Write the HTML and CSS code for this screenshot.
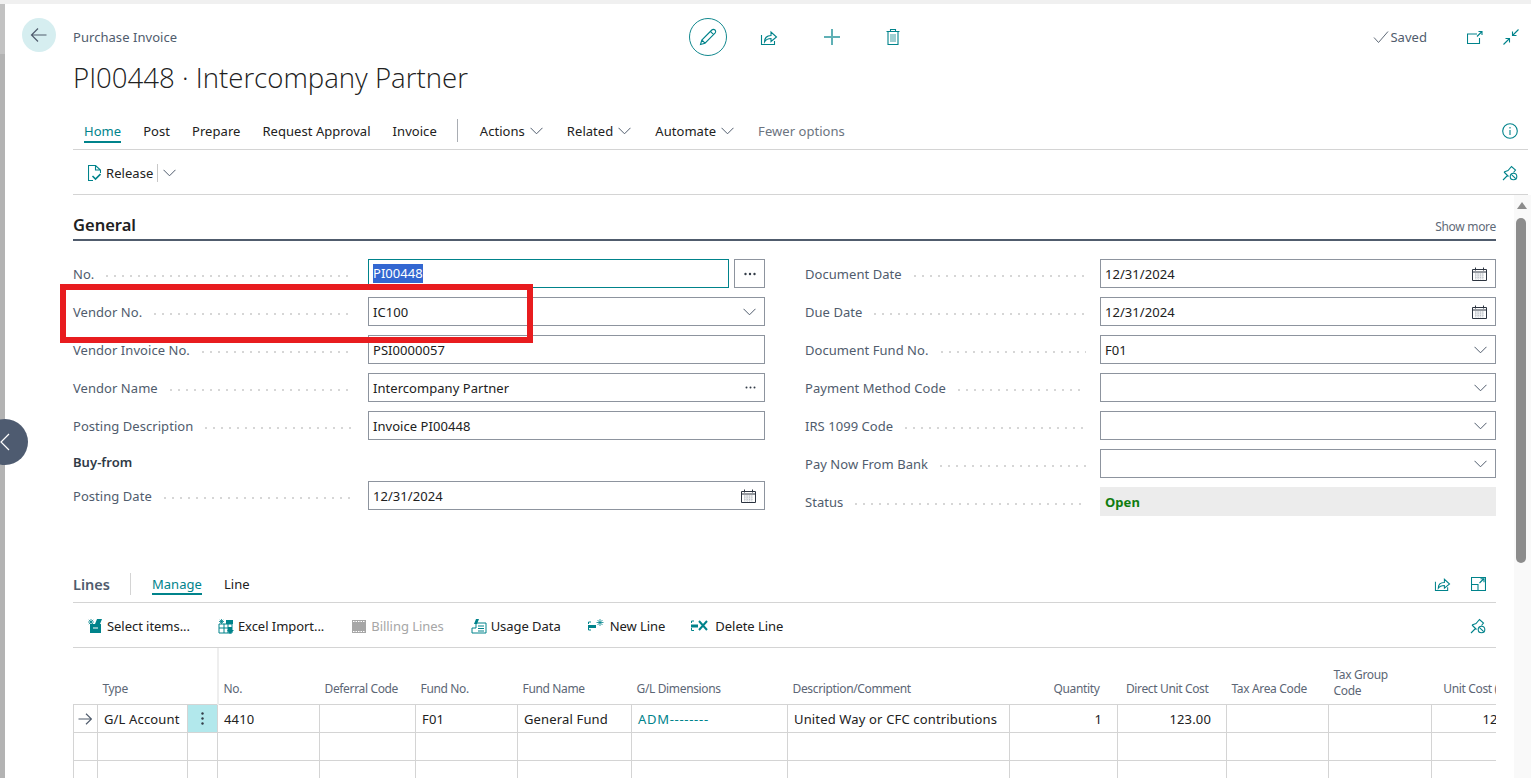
FILE: index.html
```html
<!DOCTYPE html>
<html lang="en">
<head>
<meta charset="utf-8">
<title>Purchase Invoice</title>
<link rel="stylesheet" href="styles.css">
</head>
<body>
<div class="app">
  <div class="topstrip"></div>
  <div class="shell">
    <div class="gutter"></div>
    <main class="page">
      <header class="head">
        <button class="back" aria-label="Back">
          <svg width="18" height="18" viewBox="0 0 18 18" class="ic-dark"><path d="M16.500 9H1.500M8 2.500 1.500 9 8 15.500"/></svg>
        </button>
        <div class="titles">
          <div class="crumb">Purchase Invoice</div>
          <h1 class="title">PI00448 · Intercompany Partner</h1>
        </div>
        <div class="actions">
          <button class="edit" aria-label="Edit">
            <svg width="18" height="18" viewBox="0 0 18 18" class="ic"><path d="M1.500 16.500 2.800 12 12.800 2a2 2 0 0 1 3.200 3.200L6 15.200zM2.800 12 6 15.200M11.400 3.400l3.200 3.200"/></svg>
          </button>
          <svg class="ic act" width="18" height="18" viewBox="0 0 18 18"><path d="M1.500 7v9.500h13V13M4.500 14c0-4 2.500-6.500 6.500-6.500V4l5.500 5L11 13.500V10.500c-3 0-5 1-6.500 3.500z"/></svg>
          <svg class="ic-soft act" width="18" height="18" viewBox="0 0 18 18"><path d="M9 1v16M1 9h16"/></svg>
          <svg class="ic act" width="16" height="18" viewBox="0 0 16 18"><path d="M1.500 3.500h13M5.500 3.500V1.500h5v2M3 3.500v13h10v-13"/><path class="thin" d="M6 6v8M8 6v8M10 6v8"/></svg>
        </div>
        <div class="status-area">
          <svg class="ic-grey" width="16" height="14" viewBox="0 0 16 14"><path d="M1 7.500 5.500 12.500 15 1.500"/></svg>
          <span class="saved">Saved</span>
          <svg class="ic popout" width="16" height="13" viewBox="0 0 16 13"><path d="M10 3H.5v9.500h12V7M10 5.500l5-5M11.500.5H15V4"/></svg>
          <svg class="ic collapse" width="16" height="16" viewBox="0 0 16 16"><path d="M15.500.5 9.500 6.500M9.500 2.500v4H13.500M.5 15.500l6-6M2.500 9.500h4v4"/></svg>
        </div>
      </header>

      <nav class="tabs">
        <a class="tab active">Home</a>
        <a class="tab">Post</a>
        <a class="tab">Prepare</a>
        <a class="tab">Request Approval</a>
        <a class="tab">Invoice</a>
        <span class="tab-div"></span>
        <a class="tab menu">Actions <svg class="chev" width="13" height="8" viewBox="0 0 13 8"><path d="M.5.800 6.500 6.800 12.500.800"/></svg></a>
        <a class="tab menu">Related <svg class="chev" width="13" height="8" viewBox="0 0 13 8"><path d="M.5.800 6.500 6.800 12.500.800"/></svg></a>
        <a class="tab menu">Automate <svg class="chev" width="13" height="8" viewBox="0 0 13 8"><path d="M.5.800 6.500 6.800 12.500.800"/></svg></a>
        <a class="tab muted">Fewer options</a>
        <svg class="ic info" width="16" height="16" viewBox="0 0 16 16"><circle cx="8" cy="8" r="7.300"/><path d="M8 7v5M8 4v1.500"/></svg>
      </nav>

      <div class="cmdbar">
        <svg class="ic" width="13" height="16" viewBox="0 0 13 16"><path d="M5 15.500H.5V.5h7l5 4.500V8M7.500.5V5h5"/><path class="check" d="M4.500 11l3 3 5-5"/></svg>
        <span class="cmd-text">Release</span>
        <span class="cmd-div"></span>
        <svg class="chev" width="13" height="8" viewBox="0 0 13 8"><path d="M.5.800 6.500 6.800 12.500.800"/></svg>
        <svg class="ic pin" width="16" height="16" viewBox="0 0 16 16"><path d="M1 15l4.500-4.500M2 7l4-1.500L9.500 1.500l4 3.500-2 2.500M2 7l4.500 4.500"/><circle cx="11.500" cy="11.500" r="3.300"/><path d="M9.300 9.300l4.400 4.400"/></svg>
      </div>

      <section class="general">
        <div class="sec-head">
          <h2 class="sec-title">General</h2>
          <span class="show-more">Show more</span>
        </div>
        <div class="form">
          <div class="col">
            <div class="field"><span class="lbl">No.</span><i class="dots"></i>
              <div class="box focus"><span class="sel">PI00448</span></div>
              <button class="assist">
                <svg width="12" height="4" viewBox="0 0 12 4" class="fill-dark"><circle cx="1.500" cy="2" r="1.200"/><circle cx="6" cy="2" r="1.200"/><circle cx="10.500" cy="2" r="1.200"/></svg>
              </button>
            </div>
            <div class="field"><span class="lbl">Vendor No.</span><i class="dots"></i>
              <div class="box">IC100<svg class="chev end" width="13" height="8" viewBox="0 0 13 8"><path d="M.5.800 6.500 6.800 12.500.800"/></svg></div>
            </div>
            <div class="field"><span class="lbl">Vendor Invoice No.</span><i class="dots"></i><div class="box">PSI0000057</div></div>
            <div class="field"><span class="lbl">Vendor Name</span><i class="dots"></i>
              <div class="box">Intercompany Partner<svg class="fill-dark end" width="11" height="3" viewBox="0 0 11 3"><circle cx="1.500" cy="1.500" r="1"/><circle cx="5.500" cy="1.500" r="1"/><circle cx="9.500" cy="1.500" r="1"/></svg></div>
            </div>
            <div class="field"><span class="lbl">Posting Description</span><i class="dots"></i><div class="box">Invoice PI00448</div></div>
            <div class="subhead">Buy-from</div>
            <div class="field"><span class="lbl">Posting Date</span><i class="dots"></i>
              <div class="box">12/31/2024<svg class="cal end" width="15" height="14" viewBox="0 0 15 14"><path d="M.5 2.500h14v11H.5zM3.500.500v3M11.500.500v3M.5 5h14"/><path class="grid" d="M3 7h9M3 9h9M3 11h9M4 6.500v6M6.300 6.500v6M8.600 6.500v6M11 6.500v6"/></svg></div>
            </div>
          </div>
          <div class="col">
            <div class="field"><span class="lbl">Document Date</span><i class="dots"></i>
              <div class="box">12/31/2024<svg class="cal end" width="15" height="14" viewBox="0 0 15 14"><path d="M.5 2.500h14v11H.5zM3.500.500v3M11.500.500v3M.5 5h14"/><path class="grid" d="M3 7h9M3 9h9M3 11h9M4 6.500v6M6.300 6.500v6M8.600 6.500v6M11 6.500v6"/></svg></div>
            </div>
            <div class="field"><span class="lbl">Due Date</span><i class="dots"></i>
              <div class="box">12/31/2024<svg class="cal end" width="15" height="14" viewBox="0 0 15 14"><path d="M.5 2.500h14v11H.5zM3.500.500v3M11.500.500v3M.5 5h14"/><path class="grid" d="M3 7h9M3 9h9M3 11h9M4 6.500v6M6.300 6.500v6M8.600 6.500v6M11 6.500v6"/></svg></div>
            </div>
            <div class="field"><span class="lbl">Document Fund No.</span><i class="dots"></i>
              <div class="box">F01<svg class="chev end" width="13" height="8" viewBox="0 0 13 8"><path d="M.5.800 6.500 6.800 12.500.800"/></svg></div>
            </div>
            <div class="field"><span class="lbl">Payment Method Code</span><i class="dots"></i>
              <div class="box"><svg class="chev end" width="13" height="8" viewBox="0 0 13 8"><path d="M.5.800 6.500 6.800 12.500.800"/></svg></div>
            </div>
            <div class="field"><span class="lbl">IRS 1099 Code</span><i class="dots"></i>
              <div class="box"><svg class="chev end" width="13" height="8" viewBox="0 0 13 8"><path d="M.5.800 6.500 6.800 12.500.800"/></svg></div>
            </div>
            <div class="field"><span class="lbl">Pay Now From Bank</span><i class="dots"></i>
              <div class="box"><svg class="chev end" width="13" height="8" viewBox="0 0 13 8"><path d="M.5.800 6.500 6.800 12.500.800"/></svg></div>
            </div>
            <div class="field"><span class="lbl">Status</span><i class="dots"></i><div class="box readonly">Open</div></div>
          </div>
        </div>
      </section>

      <section class="lines">
        <div class="lines-head">
          <span class="lines-title">Lines</span>
          <span class="lines-div"></span>
          <a class="ltab active">Manage</a>
          <a class="ltab">Line</a>
          <svg class="ic l-share" width="17" height="16" viewBox="0 0 18 17"><path d="M1.500 6v9.500h13V12M4.500 13c0-4 2.500-6 6.500-6V3.500l5.500 5L11 13V10c-3 0-5 .5-6.500 3z"/></svg>
          <svg class="ic l-expand" width="15" height="14" viewBox="0 0 15 14"><path d="M.5 13.500V.5h14v13zM.5 7.500h6.500v6M8.500 6 13 1.500M9.500 1.800H13v3.500"/></svg>
        </div>
        <div class="toolbar">
          <span class="tool"><svg class="tool-ic" width="16" height="16" viewBox="0 0 16 16"><path class="solid" d="M3 6h11v9H3z"/><path class="cut" d="M6 10h5"/><path class="spark" d="M4 1v6M1 4h6M1.800 1.800l4.400 4.400M6.200 1.800 1.800 6.200"/><path class="solid" d="M10 1h5l-2 5h-5z"/></svg>Select items...</span>
          <span class="tool"><svg class="tool-ic" width="16" height="16" viewBox="0 0 16 16"><path class="line" d="M1 6h13v9H1zM1 10h13M6 6v9M10 6v9"/><path class="spark" d="M3.500 1v5M1 3.500h5M1.800 1.800l3.400 3.400M5.200 1.800 1.800 5.200"/><path class="solid" d="M8 2h7v4H8zM10 9h4v3h2l-4 4-3-4h1z"/></svg>Excel Import...</span>
          <span class="tool off"><svg class="tool-ic ic-w5" width="14" height="13" viewBox="0 0 14 13"><path class="greyfill" d="M0 0h14v13H0z"/><path class="cut" d="M1 1.500h12M1 11.500h12" stroke-dasharray="1.500 1"/></svg>Billing Lines</span>
          <span class="tool tight"><svg class="tool-ic" width="16" height="15" viewBox="0 0 16 15"><path class="solid" d="M5 0h3L6 5H3z"/><path class="line" d="M5 4h10v10H1V9h4zM7 7h6M7 9.500h6M7 12h6"/></svg>Usage Data</span>
          <span class="tool tighter"><svg class="tool-ic ic-w6" width="16" height="14" viewBox="0 0 16 14"><path class="line" d="M3 3H.5M.5 3v2M.5 9v2h2.500"/><path class="solid" d="M0 6h8v3H0z"/><path class="spark" d="M12 0v7M8.500 3.500h7M9.500 1l5 5M14.500 1l-5 5"/></svg>New Line</span>
          <span class="tool"><svg class="tool-ic ic-w7" width="17" height="14" viewBox="0 0 17 14"><path class="line" d="M3 2H.5v2M.5 9v2.500H3"/><path class="solid" d="M0 5.500h7v3H0z"/><path class="heavy" d="M8 2l8 9M16 2l-8 9"/></svg>Delete Line</span>
          <svg class="ic l-pin" width="16" height="16" viewBox="0 0 16 16"><path d="M1 15l4.500-4.500M2 7l4-1.500L9.500 1.500l4 3.500-2 2.500M2 7l4.500 4.500"/><circle cx="11.500" cy="11.500" r="3.300"/><path d="M9.300 9.300l4.400 4.400"/></svg>
        </div>
        <div class="grid-wrap">
          <table class="grid">
            <colgroup>
              <col class="c-a"><col class="c-b"><col class="c-c"><col class="c-d"><col class="c-e"><col class="c-f"><col class="c-g"><col class="c-h"><col class="c-i"><col class="c-j"><col class="c-k"><col class="c-l"><col class="c-m"><col class="c-n">
            </colgroup>
            <thead>
              <tr>
                <th></th><th>Type</th><th class="frozen"></th><th>No.</th><th>Deferral Code</th><th>Fund No.</th><th>Fund Name</th><th>G/L Dimensions</th><th>Description/Comment</th><th class="num">Quantity</th><th class="num">Direct Unit Cost</th><th>Tax Area Code</th><th class="wrap">Tax Group Code</th><th class="num last">Unit Cost (LCY)</th>
              </tr>
            </thead>
            <tbody>
              <tr>
                <td class="arrow"><svg width="14" height="12" viewBox="0 0 14 12" class="ic-dark"><path d="M.5 6h13M8 .8 13.500 6 8 11.200"/></svg></td>
                <td>G/L Account</td>
                <td class="kebab"><svg width="3" height="13" viewBox="0 0 3 13" class="fill-dark"><circle cx="1.500" cy="1.500" r="1.200"/><circle cx="1.500" cy="6.500" r="1.200"/><circle cx="1.500" cy="11.500" r="1.200"/></svg></td>
                <td>4410</td><td></td><td>F01</td><td>General Fund</td><td class="link">ADM--------</td><td>United Way or CFC contributions</td><td class="num">1</td><td class="num">123.00</td><td></td><td></td><td class="num last">123.00</td>
              </tr>
              <tr><td></td><td></td><td></td><td></td><td></td><td></td><td></td><td></td><td></td><td></td><td></td><td></td><td></td><td></td></tr>
              <tr><td></td><td></td><td></td><td></td><td></td><td></td><td></td><td></td><td></td><td></td><td></td><td></td><td></td><td></td></tr>
            </tbody>
          </table>
        </div>
      </section>
    </main>
  </div>

  <div class="scrolltrack">
    <span class="sb-up"></span>
    <span class="sb-thumb"></span>
  </div>
  <button class="side-toggle" aria-label="Previous">
    <svg width="10" height="18" viewBox="0 0 10 18"><path d="M9 1 1 9l8 8"/></svg>
  </button>
  <div class="callout"></div>
</div>
</body>
</html>
```
FILE: styles.css
```css
* { box-sizing: border-box; }
html, body { margin: 0; padding: 0; background: #fff; }
body { font-family: "Noto Sans", "Open Sans", sans-serif; font-size: 13px; letter-spacing: .05px; color: #212121; overflow: hidden; }
button { border: 0; padding: 0; background: none; font: inherit; }
svg { display: block; flex: none; }
.ic path, .ic circle { fill: none; stroke: #00838b; stroke-width: 1.1; }
.ic .thin { stroke: #4fa9ae; }
.ic .check { stroke-width: 1.6; }
.ic-soft path { fill: none; stroke: #5fb0b5; stroke-width: 2; }
.ic-dark path { fill: none; stroke: #505c6d; stroke-width: 1.2; }
.ic-grey path { fill: none; stroke: #5f6a78; stroke-width: 1; }
.chev path { fill: none; stroke: #505c6d; stroke-width: 1; }
.fill-dark circle { fill: #333c48; }
.cal path { fill: none; stroke: #2c3440; stroke-width: 1; }
.cal .grid { stroke: #8a93a0; stroke-width: .6; stroke-dasharray: 1 .8; }

.app { position: relative; width: 1531px; height: 778px; overflow: hidden; display: flex; flex-direction: column; }
.topstrip { height: 4px; background: #f0f0f0; flex: none; }
.shell { display: flex; flex: 1; min-height: 0; }
.gutter { width: 5px; flex: none; background: linear-gradient(#c2c2c2 50px, #b3b3b3 50px); }
.page { flex: 1; min-width: 0; padding: 0 3px 0 17px; }

.head { display: flex; height: 108px; padding-top: 14px; }
.back { width: 34px; height: 34px; border-radius: 50%; background: #d6eef0; display: flex; align-items: center; justify-content: center; margin-right: 17px; flex: none; }
.titles { width: 616px; flex: none; padding-top: 10px; }
.crumb { font-size: 13px; line-height: 18px; color: #505c6d; }
.title { margin: 12px 0 0; font-family: "Open Sans", sans-serif; font-weight: 300; font-size: 27.6px; line-height: 38px; color: #212121; letter-spacing: 0; white-space: nowrap; }
.actions { display: flex; align-items: flex-start; }
.edit { width: 38px; height: 38px; border: 1px solid #13898f; border-radius: 50%; display: flex; align-items: center; justify-content: center; }
.act { margin-top: 10px; }
.actions .act:nth-child(2) { margin-left: 33px; }
.actions .act:nth-child(3) { margin-left: 45px; }
.actions .act:nth-child(4) { margin-left: 44px; }
.status-area { margin-left: auto; display: flex; align-items: center; height: 38px; padding-right: 9px; }
.saved { color: #505c6d; margin-left: 1px; }
.popout { margin-left: 40px; }
.collapse { margin-left: 20px; }

.tabs { display: flex; align-items: center; height: 38px; margin-left: 51px; border-bottom: 1px solid #d4d4d4; padding-left: 11px; }
.tab { position: relative; margin-right: 22px; line-height: 20px; color: #212121; display: flex; align-items: center; white-space: nowrap; }
.tab.active { color: #00838b; }
.tab.active::after { content: ""; position: absolute; left: 0; right: 0; bottom: -2px; height: 2px; background: #00838b; }
.tab.muted { color: #6b7480; }
.tab.menu { margin-right: 24px; }
.tab.menu .chev { margin-left: 5px; }
.tab-div { width: 1px; height: 23px; background: #a9adb3; margin: 0 22px 0 -2px; }
.info { margin-left: auto; margin-right: 10px; }

.cmdbar { display: flex; align-items: center; height: 45px; margin-left: 51px; border-bottom: 1px solid #d4d4d4; padding: 1px 0 0 15px; }
.cmd-text { margin-left: 5px; }
.cmd-div { width: 1px; height: 18px; background: #c8c8c8; margin: 0 5px 0 4px; }
.pin { margin-left: auto; margin-right: 10px; }

.general { margin: 0 32px 0 51px; }
.sec-head { display: flex; align-items: center; justify-content: space-between; height: 46px; padding-top: 16px; border-bottom: 2px solid #505c6d; }
.sec-title { margin: 0; font-size: 16.5px; font-weight: 600; line-height: 22px; letter-spacing: 0; }
.show-more { font-size: 12px; color: #5f6a78; letter-spacing: -.3px; margin-top: 3px; }
.form { display: grid; grid-template-columns: 692px 691px; column-gap: 40px; padding-top: 18px; }
.col { display: flex; flex-direction: column; gap: 9px; }
.field { display: flex; align-items: center; height: 29px; }
.lbl { color: #505c6d; white-space: nowrap; }
.dots { flex: 1; height: 2px; margin: 4px 14px 0 12px; background-image: linear-gradient(to right, #d6d6d6 2px, transparent 2px); background-size: 8px 2px; background-repeat: repeat-x; }
.box { width: 397px; height: 29px; flex: none; border: 1px solid #8d949e; padding: 0 4px; display: flex; align-items: center; white-space: nowrap; }
.col:nth-child(2) .box { width: 396px; }
.box .end { margin-left: auto; margin-right: 4px; }
.box.focus { width: 361px; border-color: #00838b; }
.sel { background: #3367d1; color: #fff; line-height: 19px; }
.assist { width: 31px; height: 29px; margin-left: 5px; border: 1px solid #8d949e; display: flex; align-items: center; justify-content: center; flex: none; }
.box.readonly { background: #ececec; border-color: #ececec; color: #107c10; font-weight: 700; }
.subhead { font-weight: 600; color: #303a46; height: 19px; line-height: 19px; margin-top: 4px; }

.lines { margin: 0 32px 0 51px; padding-top: 52px; }
.lines-head { display: flex; align-items: center; height: 35px; border-bottom: 1px solid #d4d4d4; padding-bottom: 3px; }
.lines-title { font-size: 14.5px; font-weight: 600; color: #505c6d; letter-spacing: 0; }
.lines-div { width: 1px; height: 22px; background: #d4d4d4; margin: 0 21px 0 20px; }
.ltab { position: relative; margin-right: 22px; }
.ltab.active { color: #00838b; }
.ltab.active::after { content: ""; position: absolute; left: 0; right: 0; bottom: -2px; height: 2px; background: #00838b; }
.l-share { margin-left: auto; margin-right: 20px; }
.l-expand { margin-right: 10px; }
.toolbar { display: flex; align-items: center; height: 45px; border-bottom: 1px solid #d4d4d4; padding: 2px 0 0 14px; }
.tool { display: flex; align-items: center; white-space: nowrap; margin-right: 28px; letter-spacing: -.05px; }
.tool.off { margin-right: 27px; }
.tool.tight { margin-right: 27px; }
.tool.tighter { margin-right: 26px; }
.tool-ic { margin-right: 4px; }
.ic-w5 { margin-right: 5px; }
.ic-w6 { margin-right: 6px; }
.ic-w7 { margin-right: 7px; }
.tool.off { color: #a6a6a6; }
.tool-ic .solid { fill: #00838b; }
.tool-ic .line { fill: none; stroke: #00838b; stroke-width: 1; }
.tool-ic .spark { fill: none; stroke: #00838b; stroke-width: .8; }
.tool-ic .cut { fill: none; stroke: #fff; stroke-width: 1; }
.tool-ic .greyfill { fill: #a6a6a6; }
.tool-ic .heavy { fill: none; stroke: #00838b; stroke-width: 2; }
.l-pin { margin-left: auto; margin-right: 10px; }

.grid-wrap { overflow: hidden; }
.grid { border-collapse: collapse; table-layout: fixed; width: 1468px; }
.c-a { width: 24px; } .c-b { width: 90px; } .c-c { width: 30px; } .c-d { width: 102px; } .c-e { width: 96px; } .c-f { width: 102px; } .c-g { width: 114px; } .c-h { width: 156px; } .c-i { width: 222px; } .c-j { width: 108px; } .c-k { width: 109px; } .c-l { width: 102px; } .c-m { width: 103px; } .c-n { width: 110px; }
.grid th { height: 56px; padding: 0 5px 7px; vertical-align: bottom; text-align: left; font-weight: 400; font-size: 12px; line-height: 16px; color: #5c6675; letter-spacing: -.35px; white-space: nowrap; border-bottom: 1px solid #d4d4d4; overflow: hidden; }
.grid th.wrap { white-space: normal; padding: 0 30px 5px 5px; }
.grid th.num { text-align: right; padding-right: 18px; }
.grid th.last { padding-right: 21px; }
.grid th.frozen { border-right: 2px solid #eee; }
.grid td { height: 28px; padding: 1px 5px 0 6px; border: 1px solid #d4d4d4; border-top: 0; white-space: nowrap; overflow: hidden; line-height: 16px; letter-spacing: .15px; }
.grid td.num { text-align: right; padding-right: 15px; }
.grid td.last { padding-right: 17px; }
.grid td.link { color: #00838b; letter-spacing: .7px; }
.grid td.arrow { padding-left: 4px; }
.grid td.kebab { background: #b2e8ec; padding: 0 0 0 13px; }

.scrolltrack { position: absolute; right: 0; top: 195px; bottom: 0; width: 17px; background: #f9f9f9; }
.sb-up { position: absolute; left: 3px; top: 7px; border-left: 5px solid transparent; border-right: 5px solid transparent; border-bottom: 7px solid #8c8c8c; }
.sb-thumb { position: absolute; left: 2px; top: 23px; width: 10px; height: 345px; border-radius: 5px; background: #8c8c8c; }
.side-toggle { position: absolute; left: -18px; top: 419px; width: 46px; height: 46px; border-radius: 50%; background: #4e5b70; display: flex; align-items: center; justify-content: flex-end; padding-right: 18px; }
.side-toggle path { fill: none; stroke: #fff; stroke-width: 1.2; }
.callout { position: absolute; left: 60px; top: 284px; width: 473px; height: 59px; border: 6px solid #e81c1f; pointer-events: none; }
```
